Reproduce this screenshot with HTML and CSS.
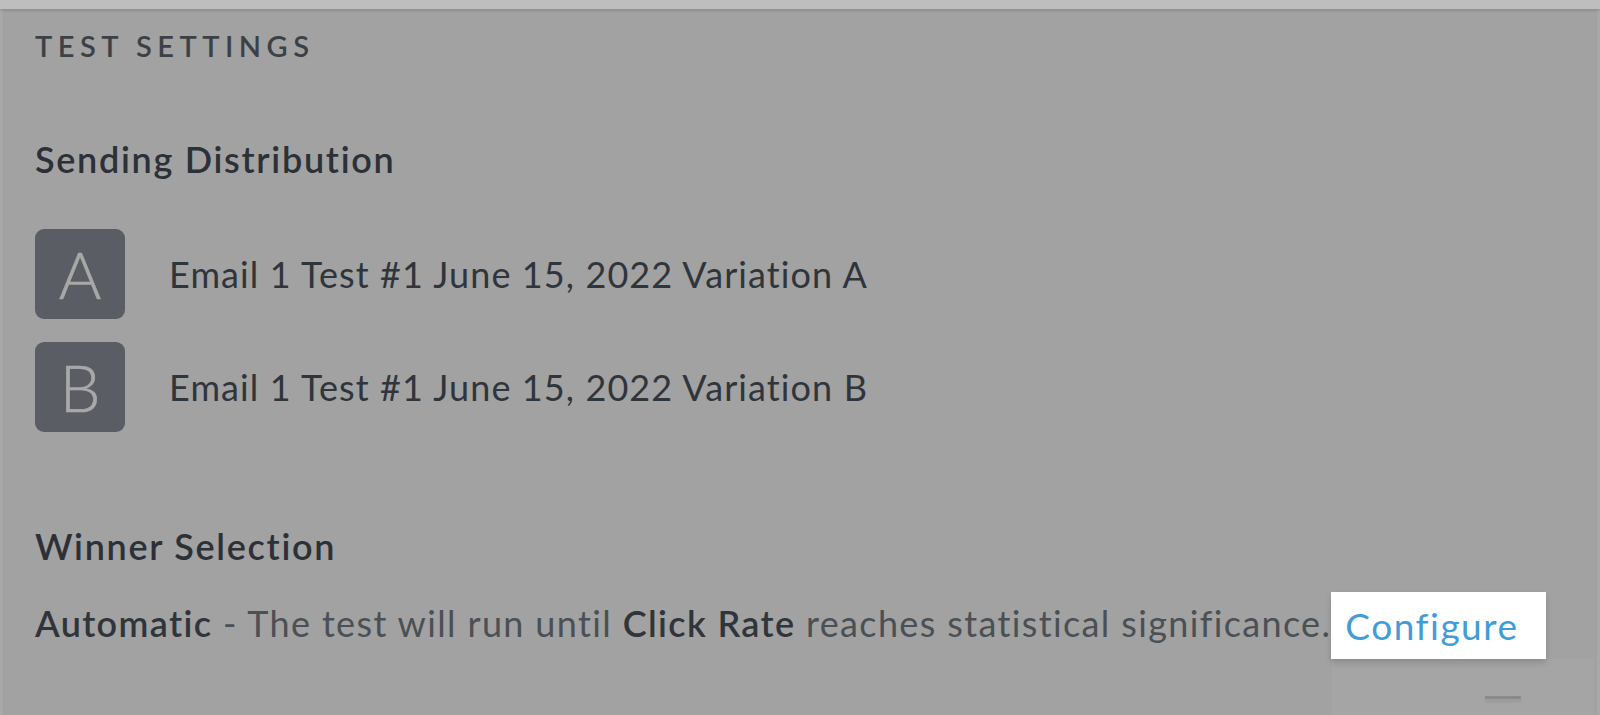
FILE: index.html
```html
<!DOCTYPE html>
<html>
<head>
<meta charset="utf-8">
<link rel="stylesheet" href="styles.css">
</head>
<body>
<div class="topbar"></div>
<div class="panel">
  <div class="content">
    <div class="section-title">TEST SETTINGS</div>
    <div class="heading heading-dist">Sending Distribution</div>
    <div class="variations">
      <div class="variation">
        <div class="badge">A</div>
        <div class="var-name">Email 1 Test #1 June 15, 2022 Variation A</div>
      </div>
      <div class="variation">
        <div class="badge">B</div>
        <div class="var-name">Email 1 Test #1 June 15, 2022 Variation B</div>
      </div>
    </div>
    <div class="heading heading-winner">Winner Selection</div>
    <div class="winner-line">
      <span class="desc"><span class="strong">Automatic</span> - The test will run until <span class="strong">Click Rate</span> reaches statistical significance.</span><span class="configure-wrap"><span class="configure">Configure</span></span>
    </div>
  </div>
  <div class="below-col"><div class="dash"></div></div>
</div>
</body>
</html>
```

FILE: styles.css
```css
html, body {
  margin: 0;
  padding: 0;
}
body {
  width: 1600px;
  height: 715px;
  overflow: hidden;
  background: #a2a2a2;
  font-family: Lato, "Liberation Sans", sans-serif;
  position: relative;
}
.topbar {
  height: 9px;
  background: #bebebe;
  box-shadow: 0 2px 3px rgba(0,0,0,0.12);
  position: relative;
  z-index: 2;
}
.panel {
  height: 706px;
  border-left: 3px solid #a8a8a8;
  border-right: 3px solid #a8a8a8;
  box-sizing: border-box;
  position: relative;
}
.content {
  padding-left: 32px;
}
.section-title {
  padding-top: 20px;
  font-size: 29px;
  line-height: 34px;
  letter-spacing: 5.5px;
  color: #3b4147;
  font-weight: 600;
}
.heading {
  font-size: 36px;
  line-height: 40px;
  font-weight: 600;
  letter-spacing: 1.7px;
  color: #2c3137;
}
.heading-dist {
  margin-top: 76px;
}
.variations {
  margin-top: 50px;
  display: flex;
  flex-direction: column;
  gap: 23px;
}
.variation {
  display: flex;
  align-items: center;
  gap: 44px;
}
.badge {
  width: 90px;
  height: 90px;
  border-radius: 9px;
  background: #5a5d63;
  color: #a8a8a8;
  font-size: 65px;
  font-weight: 300;
  -webkit-text-stroke: 0.6px #a8a8a8;
  display: flex;
  align-items: center;
  justify-content: center;
  line-height: 1;
}
.var-name {
  font-size: 36px;
  letter-spacing: 1.1px;
  color: #30353b;
}
.heading-winner {
  margin-top: 94px;
}
.winner-line {
  margin-top: 26px;
  font-size: 36px;
  line-height: 44px;
  color: #4b5055;
  display: flex;
  align-items: center;
  white-space: pre;
  letter-spacing: 1.36px;
}
.desc {
  padding-bottom: 6px;
}
.strong {
  font-weight: 600;
  color: #30353b;
}
.configure-wrap {
  display: inline-flex;
  align-items: center;
  background: #ffffff;
  height: 67px;
  width: 215px;
  box-sizing: border-box;
  padding-left: 14px;
  box-shadow: 0 4px 6px rgba(0,0,0,0.15);
  position: relative;
  z-index: 3;
}
.configure {
  color: #3f9dda;
  font-size: 37px;
  letter-spacing: 1.5px;
}
.below-col {
  position: absolute;
  left: 1329px;
  top: 650px;
  width: 262px;
  height: 60px;
  background: #a5a5a5;
}
.dash {
  position: absolute;
  left: 153px;
  top: 37px;
  width: 36px;
  height: 3px;
  background: #8a8a8a;
  box-shadow: 0 3px 3px rgba(0,0,0,0.08);
}
```
